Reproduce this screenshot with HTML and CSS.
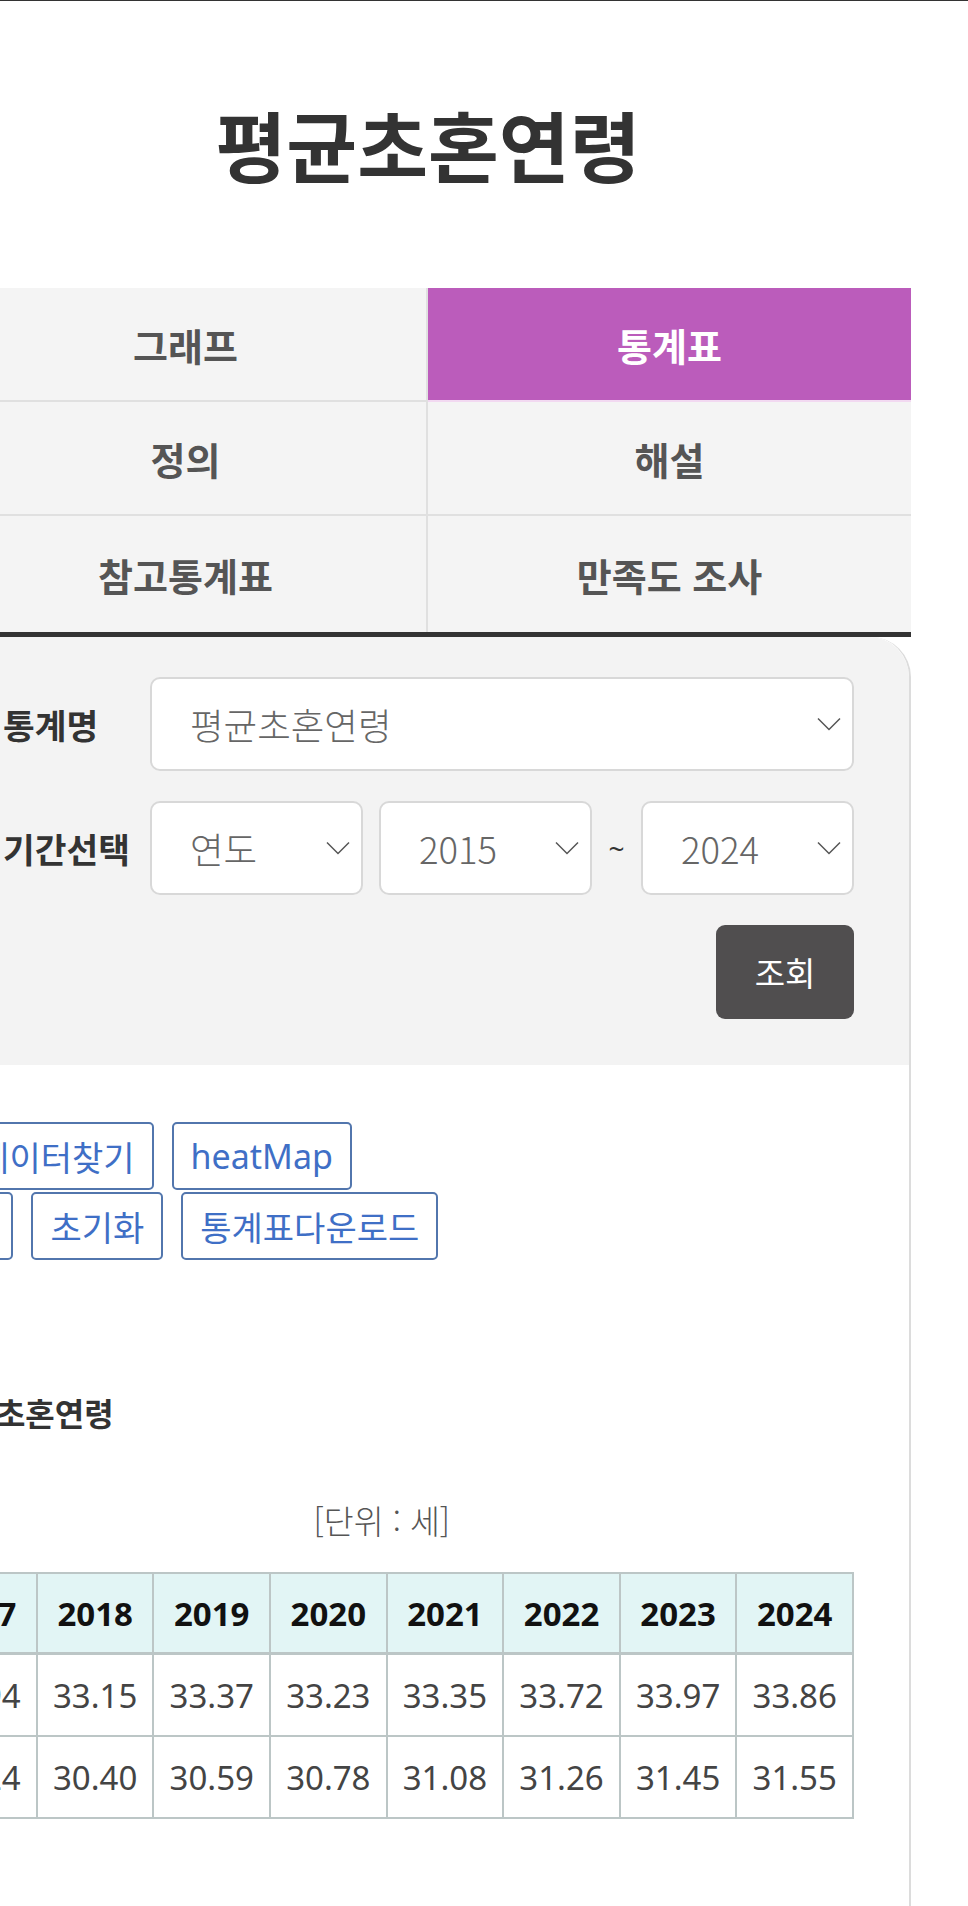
FILE: index.html
```html
<!DOCTYPE html>
<html lang="ko">
<head>
<meta charset="utf-8">
<meta name="viewport" content="width=device-width">
<title>평균초혼연령 - 통계표</title>
<link rel="stylesheet" href="styles.css">
</head>
<body>
<div id="wrap">
    <h1 class="stat-title">평균초혼연령</h1>

    <ul class="stat-tabs">
        <li><a href="#">그래프</a></li>
        <li class="on"><a href="#">통계표</a></li>
        <li><a href="#">정의</a></li>
        <li><a href="#">해설</a></li>
        <li><a href="#">참고통계표</a></li>
        <li><a href="#">만족도 조사</a></li>
    </ul>

    <div class="stat-box">
        <div class="search">
            <div class="search-row">
                <span class="search-label">통계명</span>
                <div class="select">
                    <span>평균초혼연령</span>
                    <svg class="arr" width="24" height="14" viewBox="0 0 24 14"><path d="M1 1.5l11 11 11-11" fill="none" stroke="#555" stroke-width="1.5"/></svg>
                </div>
            </div>
            <div class="search-row">
                <span class="search-label">기간선택</span>
                <div class="select sm gap">
                    <span>연도</span>
                    <svg class="arr" width="24" height="14" viewBox="0 0 24 14"><path d="M1 1.5l11 11 11-11" fill="none" stroke="#555" stroke-width="1.5"/></svg>
                </div>
                <div class="select sm">
                    <span>2015</span>
                    <svg class="arr" width="24" height="14" viewBox="0 0 24 14"><path d="M1 1.5l11 11 11-11" fill="none" stroke="#555" stroke-width="1.5"/></svg>
                </div>
                <span class="tilde">~</span>
                <div class="select sm">
                    <span>2024</span>
                    <svg class="arr" width="24" height="14" viewBox="0 0 24 14"><path d="M1 1.5l11 11 11-11" fill="none" stroke="#555" stroke-width="1.5"/></svg>
                </div>
            </div>
            <div class="search-btns">
                <button class="btn-search">조회</button>
            </div>
        </div>

        <div class="result">
            <div class="result-head">
                <div class="tool-btns">
                    <div class="tool-row">
                        <button class="tool-btn">데이터찾기</button>
                        <button class="tool-btn">heatMap</button>
                    </div>
                    <div class="tool-row">
                        <button class="tool-btn">표 전환</button>
                        <button class="tool-btn">초기화</button>
                        <button class="tool-btn">통계표다운로드</button>
                    </div>
                </div>
                <h2 class="tbl-title">평균초혼연령</h2>
                <p class="unit">[단위 : 세]</p>
            </div>

            <div class="tbl-wrap">
                <table class="tbl">
                    <thead>
                        <tr>
                            <th>구분</th>
                            <th>2015</th><th>2016</th><th>2017</th><th>2018</th><th>2019</th>
                            <th>2020</th><th>2021</th><th>2022</th><th>2023</th><th>2024</th>
                        </tr>
                    </thead>
                    <tbody>
                        <tr>
                            <td>남자</td>
                            <td>32.57</td><td>32.79</td><td>32.94</td><td>33.15</td><td>33.37</td>
                            <td>33.23</td><td>33.35</td><td>33.72</td><td>33.97</td><td>33.86</td>
                        </tr>
                        <tr>
                            <td>여자</td>
                            <td>30.03</td><td>30.11</td><td>30.24</td><td>30.40</td><td>30.59</td>
                            <td>30.78</td><td>31.08</td><td>31.26</td><td>31.45</td><td>31.55</td>
                        </tr>
                    </tbody>
                </table>
            </div>
        </div>
    </div>
</div>
</body>
</html>
```

FILE: styles.css
```css
html, body {
    margin: 0;
}
body {
    background-color: white;
    border-top: 1px solid #333;
    font-family: "Noto Sans", "Noto Sans CJK KR", sans-serif;
    color: #333;
    overflow: hidden;
}

#wrap {
    width: 966px;
    margin-left: -55px;
}

.stat-title {
    margin: 0;
    padding: 104px 0 106px;
    font-family: "Noto Sans CJK KR", sans-serif;
    font-size: 77px;
    line-height: 77px;
    font-weight: 700;
    text-align: center;
    color: #333;
}

/* tabs */
.stat-tabs {
    list-style: none;
    margin: 0;
    padding: 0;
    display: grid;
    grid-template-columns: 1fr 1fr;
    border-bottom: 5px solid #333;
}
.stat-tabs li {
    height: 112px;
    display: flex;
    align-items: center;
    justify-content: center;
    background-color: #f4f4f4;
    border-bottom: 2px solid #e0e0e0;
}
.stat-tabs li:nth-child(odd) {
    border-right: 2px solid #e0e0e0;
}
.stat-tabs li:nth-last-child(-n+2) {
    height: 116px;
    border-bottom: 0;
}
.stat-tabs a {
    font-family: "Noto Sans CJK KR", sans-serif;
    font-size: 38px;
    font-weight: 700;
    color: #555;
    text-decoration: none;
}
.stat-tabs li.on {
    background-color: #bb5cbb;
    border-bottom-color: #f2d9f1;
}
.stat-tabs li.on a {
    color: white;
}

/* search box */
.stat-box {
    border-right: 2px solid #dcdcdc;
    border-top-right-radius: 40px;
    padding-bottom: 300px;
}
.search {
    background-color: #f3f3f3;
    border-top-right-radius: 40px;
    padding: 40px 55px 46px 58px;
}
.search-row {
    display: flex;
    align-items: center;
    margin-bottom: 30px;
}
.search-label {
    flex: none;
    width: 147px;
    font-family: "Noto Sans CJK KR", sans-serif;
    font-size: 34.5px;
    font-weight: 700;
    color: #333;
}
.select {
    flex: 1;
    box-sizing: border-box;
    height: 94px;
    display: flex;
    align-items: center;
    justify-content: space-between;
    padding: 0 11px 0 38px;
    background-color: white;
    border: 2px solid #d8d8d8;
    border-radius: 10px;
    font-family: "Noto Sans CJK KR", sans-serif;
    font-size: 36.5px;
    font-weight: 300;
    color: #666;
}
.select.sm {
    flex: none;
    width: 213px;
}
.select.gap {
    margin-right: 16px;
}
.tilde {
    width: 49px;
    text-align: center;
    font-size: 28px;
    color: #333;
}
.search-btns {
    display: flex;
    justify-content: flex-end;
}
.btn-search {
    width: 138px;
    height: 94px;
    border: 0;
    border-radius: 9px;
    background-color: #504e4f;
    color: white;
    font-family: "Noto Sans CJK KR", sans-serif;
    font-size: 33px;
    cursor: pointer;
}

/* result */
.result {
    padding-top: 57px;
}
.result-head {
    width: 505px;
}
.tool-btns {
    width: 421px;
}
.tool-row {
    display: flex;
    justify-content: center;
    gap: 18px;
}
.tool-row + .tool-row {
    margin-top: 2px;
}
.tool-btn {
    flex: none;
    box-sizing: border-box;
    height: 68px;
    padding: 0 17px;
    background-color: white;
    border: 2px solid #5276ad;
    border-radius: 5px;
    font-family: "Noto Sans", "Noto Sans CJK KR", sans-serif;
    font-size: 34px;
    color: #3f6fc6;
    white-space: nowrap;
    cursor: pointer;
}
.tbl-title {
    margin: 132px 0 0 -8px;
    font-family: "Noto Sans CJK KR", sans-serif;
    font-size: 32px;
    line-height: 40px;
    font-weight: 700;
    color: #333;
}
.unit {
    margin: 68px 0 0;
    font-family: "Noto Sans CJK KR", sans-serif;
    font-size: 32.5px;
    font-weight: 300;
    line-height: 40px;
    text-align: right;
    color: #555;
}

.tbl-wrap {
    display: flex;
    justify-content: flex-end;
    margin-top: 32px;
    padding-right: 55px;
}
.tbl {
    flex: none;
    border-collapse: collapse;
    table-layout: fixed;
}
.tbl th, .tbl td {
    width: 114.6px;
    padding: 0;
    border: 2px solid #bcc6c6;
    text-align: center;
    font-size: 33px;
}
.tbl th {
    height: 78px;
    background-color: #e2f5f5;
    color: #111;
    font-weight: 700;
}
.tbl thead th {
    border-bottom-width: 3px;
}
.tbl td {
    height: 80px;
    color: #444;
}
```
